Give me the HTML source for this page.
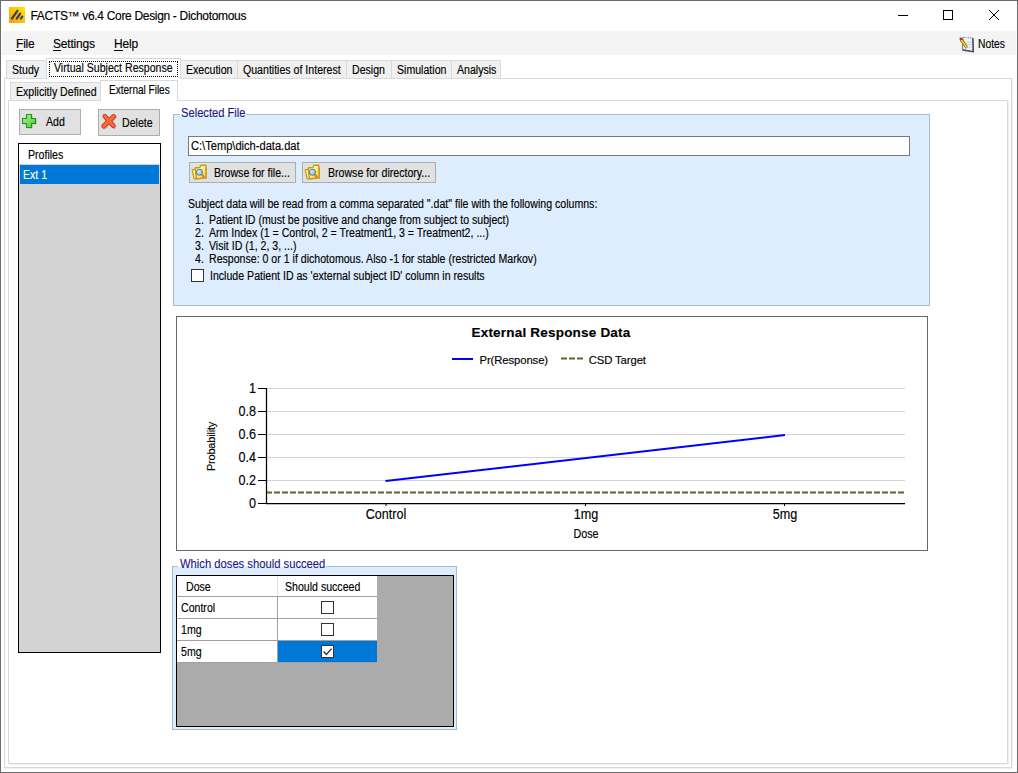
<!DOCTYPE html>
<html><head><meta charset="utf-8"><title>FACTS</title>
<style>
html,body{margin:0;padding:0;}
body{width:1018px;height:773px;position:relative;overflow:hidden;background:#fff;font-family:"Liberation Sans",sans-serif;}
.a{position:absolute;}
.t{position:absolute;white-space:nowrap;-webkit-text-stroke:0.15px currentColor;}
svg{position:absolute;overflow:visible;}
</style></head><body>

<div class="a" style="left:0px;top:0px;width:1018px;height:773px;box-sizing:border-box;border:1px solid #6b6b6b;background:#fff;"></div>
<svg style="left:9px;top:7px" width="16" height="16" viewBox="0 0 16 16">
<defs><linearGradient id="ig" x1="1" y1="0" x2="0" y2="1"><stop offset="0" stop-color="#ffea00"/><stop offset="1" stop-color="#f79a0a"/></linearGradient></defs>
<rect x="0" y="0" width="16" height="16" fill="url(#ig)"/>
<path d="M3 11.5 L8.4 3.8 M7.8 11.5 L11 6.8 M12 11.5 L13.2 9.6" stroke="#3d4152" stroke-width="2.3" stroke-linecap="round"/>
</svg>
<div class="t" style="left:30.5px;top:10.00px;font-size:12px;line-height:12px;letter-spacing:-0.32px;color:#000;font-weight:normal;">FACTS™ v6.4 Core Design - Dichotomous</div>
<div class="a" style="left:898px;top:15px;width:10px;height:1px;background:#000"></div>
<div class="a" style="left:943px;top:10px;width:10px;height:10px;box-sizing:border-box;border:1px solid #000;background:transparent;"></div>
<svg style="left:988px;top:9px" width="12" height="12" viewBox="0 0 12 12"><path d="M1 1 L11 11 M11 1 L1 11" stroke="#000" stroke-width="1"/></svg>
<div class="a" style="left:2px;top:31px;width:1014px;height:24px;background:#f4f4f4"></div>
<div class="t" style="left:16px;top:38.00px;font-size:12px;line-height:12px;letter-spacing:-0.2px;color:#000;font-weight:normal;">File</div>
<div class="t" style="left:53px;top:38.00px;font-size:12px;line-height:12px;letter-spacing:-0.2px;color:#000;font-weight:normal;">Settings</div>
<div class="t" style="left:114px;top:38.00px;font-size:12px;line-height:12px;letter-spacing:-0.2px;color:#000;font-weight:normal;">Help</div>
<div class="a" style="left:16px;top:50px;width:7px;height:1px;background:#000"></div>
<div class="a" style="left:53px;top:50px;width:8px;height:1px;background:#000"></div>
<div class="a" style="left:114px;top:50px;width:9px;height:1px;background:#000"></div>
<svg style="left:956px;top:34px" width="20" height="20" viewBox="0 0 20 20">
<path d="M8 4 L17.6 4.4 L17.9 18.4 L6.6 16.6 Z" fill="#a9b1ba"/>
<path d="M7 3.4 L16.6 3.9 L16.8 17.4 L6.3 15.6 Z" fill="#eef2fa" stroke="#6b7580" stroke-width="0.9"/>
<path d="M16.9 4 L17.4 17.8 L6.6 16" fill="none" stroke="#46505a" stroke-width="1.3"/>
<path d="M10.5 8 H15.5 M10.5 10.5 H15.5 M10.5 13 H15.5" stroke="#b8c8dc" stroke-width="0.8"/>
<path d="M8.5 3.6 h1.2 M10.7 3.7 h1.2 M12.9 3.8 h1.2 M15.1 3.9 h1.2" stroke="#fff" stroke-width="1"/>
<path d="M5.8 6.4 L10 12.8" stroke="#5a4500" stroke-width="3" stroke-linecap="round"/>
<path d="M5.8 6.4 L10 12.8" stroke="#ffd21a" stroke-width="1.8" stroke-linecap="round"/>
<path d="M9.4 13.6 L11 15.6 L10.9 12.6 Z" fill="#e8b090"/>
<circle cx="4.8" cy="4.8" r="1.4" fill="#d8241a"/>
</svg>
<div class="t" style="left:977.5px;top:38.00px;font-size:12px;line-height:12px;letter-spacing:0px;color:#000;font-weight:normal;transform:scaleX(0.86);transform-origin:0 0;">Notes</div>
<div class="a" style="left:4px;top:78px;width:1008px;height:690px;box-sizing:border-box;border:1px solid #d9d9d9;background:#fff;"></div>
<div class="a" style="left:1012px;top:79px;width:1px;height:689px;background:#efefef"></div>
<div class="a" style="left:5px;top:768px;width:1008px;height:1px;background:#efefef"></div>
<div class="a" style="left:6px;top:60px;width:42px;height:19px;box-sizing:border-box;border:1px solid #d9d9d9;background:#f0f0f0;"></div>
<div class="t" style="left:11.5px;top:64.00px;font-size:12px;line-height:12px;letter-spacing:0px;color:#000;font-weight:normal;transform:scaleX(0.882);transform-origin:0 0;">Study</div>
<div class="a" style="left:180px;top:60px;width:58px;height:19px;box-sizing:border-box;border:1px solid #d9d9d9;background:#f0f0f0;"></div>
<div class="t" style="left:185.5px;top:64.00px;font-size:12px;line-height:12px;letter-spacing:0px;color:#000;font-weight:normal;transform:scaleX(0.882);transform-origin:0 0;">Execution</div>
<div class="a" style="left:237px;top:60px;width:110px;height:19px;box-sizing:border-box;border:1px solid #d9d9d9;background:#f0f0f0;"></div>
<div class="t" style="left:242.5px;top:64.00px;font-size:12px;line-height:12px;letter-spacing:0px;color:#000;font-weight:normal;transform:scaleX(0.882);transform-origin:0 0;">Quantities of Interest</div>
<div class="a" style="left:346px;top:60px;width:46px;height:19px;box-sizing:border-box;border:1px solid #d9d9d9;background:#f0f0f0;"></div>
<div class="t" style="left:351.5px;top:64.00px;font-size:12px;line-height:12px;letter-spacing:0px;color:#000;font-weight:normal;transform:scaleX(0.882);transform-origin:0 0;">Design</div>
<div class="a" style="left:391px;top:60px;width:61px;height:19px;box-sizing:border-box;border:1px solid #d9d9d9;background:#f0f0f0;"></div>
<div class="t" style="left:396.5px;top:64.00px;font-size:12px;line-height:12px;letter-spacing:0px;color:#000;font-weight:normal;transform:scaleX(0.882);transform-origin:0 0;">Simulation</div>
<div class="a" style="left:451px;top:60px;width:50px;height:19px;box-sizing:border-box;border:1px solid #d9d9d9;background:#f0f0f0;"></div>
<div class="t" style="left:456.5px;top:64.00px;font-size:12px;line-height:12px;letter-spacing:0px;color:#000;font-weight:normal;transform:scaleX(0.882);transform-origin:0 0;">Analysis</div>
<div class="a" style="left:46px;top:58px;width:135px;height:21px;box-sizing:border-box;border:1px solid #d9d9d9;background:#fff;border-bottom:none;"></div>
<div class="a" style="left:49px;top:61px;width:129px;height:16px;box-sizing:border-box;border:1px dotted #000"></div>
<div class="t" style="left:53.7px;top:62.00px;font-size:12px;line-height:12px;letter-spacing:0px;color:#000;font-weight:normal;transform:scaleX(0.882);transform-origin:0 0;">Virtual Subject Response</div>
<div class="a" style="left:8px;top:100px;width:1000px;height:664px;box-sizing:border-box;border:1px solid #d9d9d9;background:#fff;"></div>
<div class="a" style="left:1008px;top:101px;width:1px;height:663px;background:#efefef"></div>
<div class="a" style="left:9px;top:764px;width:1000px;height:1px;background:#efefef"></div>
<div class="a" style="left:10px;top:82px;width:92px;height:19px;box-sizing:border-box;border:1px solid #d9d9d9;background:#f0f0f0;"></div>
<div class="t" style="left:16px;top:86.00px;font-size:12px;line-height:12px;letter-spacing:0px;color:#000;font-weight:normal;transform:scaleX(0.882);transform-origin:0 0;">Explicitly Defined</div>
<div class="a" style="left:100px;top:80px;width:78px;height:21px;box-sizing:border-box;border:1px solid #d9d9d9;background:#fff;border-bottom:none;"></div>
<div class="t" style="left:108.5px;top:84.00px;font-size:12px;line-height:12px;letter-spacing:0px;color:#000;font-weight:normal;transform:scaleX(0.835);transform-origin:0 0;">External Files</div>
<div class="a" style="left:19px;top:109px;width:62px;height:26px;box-sizing:border-box;border:1px solid #adadad;background:#e1e1e1;"></div>
<svg style="left:21px;top:113px" width="17" height="17" viewBox="0 0 17 17">
<defs><linearGradient id="pg" x1="0" y1="0" x2="1" y2="1"><stop offset="0" stop-color="#b0f590"/><stop offset="1" stop-color="#4fc232"/></linearGradient></defs>
<path d="M6.5 2.5 H11.5 V6.5 H15.5 V11.5 H11.5 V15.5 H6.5 V11.5 H2.5 V6.5 H6.5 Z" fill="rgba(60,40,60,0.28)"/>
<path d="M5.5 1.5 H10.5 V5.5 H14.5 V10.5 H10.5 V14.5 H5.5 V10.5 H1.5 V5.5 H5.5 Z" fill="url(#pg)" stroke="#17961a" stroke-width="1.1" stroke-linejoin="round"/>
</svg>
<div class="t" style="left:46px;top:116.00px;font-size:12px;line-height:12px;letter-spacing:0px;color:#000;font-weight:normal;transform:scaleX(0.882);transform-origin:0 0;">Add</div>
<div class="a" style="left:98px;top:109px;width:62px;height:27px;box-sizing:border-box;border:1px solid #adadad;background:#e1e1e1;"></div>
<svg style="left:100px;top:113px" width="17" height="17" viewBox="0 0 17 17">
<path d="M5.5 4 L14 13.5 M14.5 4 L4.5 14" stroke="rgba(40,40,40,0.3)" stroke-width="4.4" stroke-linecap="round"/>
<path d="M4.8 3.2 L13.2 12.6 M13.6 3.4 L3.6 13.2" stroke="#d42a10" stroke-width="4.6" stroke-linecap="round"/>
<path d="M4.8 3.2 L13.2 12.6 M13.6 3.4 L3.6 13.2" stroke="#ff6a35" stroke-width="3" stroke-linecap="round"/>
</svg>
<div class="t" style="left:121.8px;top:117.00px;font-size:12px;line-height:12px;letter-spacing:0px;color:#000;font-weight:normal;transform:scaleX(0.882);transform-origin:0 0;">Delete</div>
<div class="a" style="left:18px;top:143px;width:143px;height:510px;box-sizing:border-box;border:1px solid #000;background:#d3d3d3;"></div>
<div class="a" style="left:19px;top:144px;width:141px;height:20px;background:#fff"></div>
<div class="a" style="left:19px;top:164px;width:141px;height:1px;background:#d8d2cc"></div>
<div class="a" style="left:20px;top:165px;width:139px;height:19px;background:#0078d7"></div>
<div class="t" style="left:28px;top:149.00px;font-size:12px;line-height:12px;letter-spacing:0px;color:#000;font-weight:normal;transform:scaleX(0.882);transform-origin:0 0;">Profiles</div>
<div class="t" style="left:23px;top:169.00px;font-size:12px;line-height:12px;letter-spacing:0px;color:#fff;font-weight:normal;transform:scaleX(0.882);transform-origin:0 0;">Ext 1</div>
<div class="a" style="left:173px;top:114px;width:757px;height:192px;box-sizing:border-box;border:1px solid #a8bccf;background:#deedfd;"></div>
<div class="a" style="left:180px;top:106px;width:66px;height:9px;background:#fff"></div>
<div class="t" style="left:181px;top:107.00px;font-size:12px;line-height:12px;letter-spacing:0px;color:#1b1b8a;font-weight:normal;transform:scaleX(0.93);transform-origin:0 0;">Selected File</div>
<div class="a" style="left:188px;top:136px;width:722px;height:20px;box-sizing:border-box;border:1px solid #7a7a7a;background:#fff;"></div>
<div class="t" style="left:190.8px;top:140.00px;font-size:12px;line-height:12px;letter-spacing:0px;color:#000;font-weight:normal;transform:scaleX(0.925);transform-origin:0 0;">C:\Temp\dich-data.dat</div>
<div class="a" style="left:189px;top:162px;width:107px;height:21px;box-sizing:border-box;border:1px solid #adadad;background:#e1e1e1;"></div>
<svg style="left:191px;top:164px" width="17" height="17" viewBox="0 0 17 17">
<defs><linearGradient id="fg191" x1="0" y1="0" x2="1" y2="1"><stop offset="0" stop-color="#fffbe0"/><stop offset="0.6" stop-color="#ffe680"/><stop offset="1" stop-color="#f0c020"/></linearGradient></defs>
<path d="M6 15.5 L16 14.5 L16 3 Z" fill="rgba(40,40,60,0.35)"/>
<path d="M1.2 5.8 L4.6 5.2 L5.6 14.6 L3.2 15 Z" fill="#fff3b0" stroke="#c89a00" stroke-width="1.2" stroke-linejoin="round"/>
<path d="M4.2 4 L9 3.4 L9.6 1.4 L14.8 1.2 L15.2 13.6 L5.4 14.8 Z" fill="url(#fg191)" stroke="#c89a00" stroke-width="1.3" stroke-linejoin="round"/>
<circle cx="8.4" cy="8.2" r="3" fill="#9ad8f8" stroke="#6f7d8a" stroke-width="1.1"/>
<circle cx="7.6" cy="7.4" r="1" fill="#e8f8ff"/>
<path d="M11 10.9 L13.2 13.1" stroke="#f27a30" stroke-width="2.2"/>
</svg>
<div class="t" style="left:214.4px;top:167.00px;font-size:12px;line-height:12px;letter-spacing:0px;color:#000;font-weight:normal;transform:scaleX(0.882);transform-origin:0 0;">Browse for file...</div>
<div class="a" style="left:302px;top:162px;width:134px;height:21px;box-sizing:border-box;border:1px solid #adadad;background:#e1e1e1;"></div>
<svg style="left:304px;top:164px" width="17" height="17" viewBox="0 0 17 17">
<defs><linearGradient id="fg304" x1="0" y1="0" x2="1" y2="1"><stop offset="0" stop-color="#fffbe0"/><stop offset="0.6" stop-color="#ffe680"/><stop offset="1" stop-color="#f0c020"/></linearGradient></defs>
<path d="M6 15.5 L16 14.5 L16 3 Z" fill="rgba(40,40,60,0.35)"/>
<path d="M1.2 5.8 L4.6 5.2 L5.6 14.6 L3.2 15 Z" fill="#fff3b0" stroke="#c89a00" stroke-width="1.2" stroke-linejoin="round"/>
<path d="M4.2 4 L9 3.4 L9.6 1.4 L14.8 1.2 L15.2 13.6 L5.4 14.8 Z" fill="url(#fg304)" stroke="#c89a00" stroke-width="1.3" stroke-linejoin="round"/>
<circle cx="8.4" cy="8.2" r="3" fill="#9ad8f8" stroke="#6f7d8a" stroke-width="1.1"/>
<circle cx="7.6" cy="7.4" r="1" fill="#e8f8ff"/>
<path d="M11 10.9 L13.2 13.1" stroke="#f27a30" stroke-width="2.2"/>
</svg>
<div class="t" style="left:327.7px;top:167.00px;font-size:12px;line-height:12px;letter-spacing:0px;color:#000;font-weight:normal;transform:scaleX(0.882);transform-origin:0 0;">Browse for directory...</div>
<div class="t" style="left:188.2px;top:198.00px;font-size:12px;line-height:12px;letter-spacing:0px;color:#000;font-weight:normal;transform:scaleX(0.882);transform-origin:0 0;">Subject data will be read from a comma separated ".dat" file with the following columns:</div>
<div class="t" style="left:194.7px;top:214.00px;font-size:12px;line-height:12px;letter-spacing:0px;color:#000;font-weight:normal;transform:scaleX(0.882);transform-origin:0 0;">1.</div>
<div class="t" style="left:209px;top:214.00px;font-size:12px;line-height:12px;letter-spacing:0px;color:#000;font-weight:normal;transform:scaleX(0.882);transform-origin:0 0;">Patient ID (must be positive and change from subject to subject)</div>
<div class="t" style="left:194.7px;top:227.00px;font-size:12px;line-height:12px;letter-spacing:0px;color:#000;font-weight:normal;transform:scaleX(0.882);transform-origin:0 0;">2.</div>
<div class="t" style="left:209px;top:227.00px;font-size:12px;line-height:12px;letter-spacing:0px;color:#000;font-weight:normal;transform:scaleX(0.882);transform-origin:0 0;">Arm Index (1 = Control, 2 = Treatment1, 3 = Treatment2, ...)</div>
<div class="t" style="left:194.7px;top:240.00px;font-size:12px;line-height:12px;letter-spacing:0px;color:#000;font-weight:normal;transform:scaleX(0.882);transform-origin:0 0;">3.</div>
<div class="t" style="left:209px;top:240.00px;font-size:12px;line-height:12px;letter-spacing:0px;color:#000;font-weight:normal;transform:scaleX(0.882);transform-origin:0 0;">Visit ID (1, 2, 3, ...)</div>
<div class="t" style="left:194.7px;top:253.00px;font-size:12px;line-height:12px;letter-spacing:0px;color:#000;font-weight:normal;transform:scaleX(0.882);transform-origin:0 0;">4.</div>
<div class="t" style="left:209px;top:253.00px;font-size:12px;line-height:12px;letter-spacing:0px;color:#000;font-weight:normal;transform:scaleX(0.882);transform-origin:0 0;">Response: 0 or 1 if dichotomous. Also -1 for stable (restricted Markov)</div>
<div class="a" style="left:191px;top:269px;width:13px;height:13px;box-sizing:border-box;border:1px solid #333;background:#fff;"></div>
<div class="t" style="left:209.8px;top:270.00px;font-size:12px;line-height:12px;letter-spacing:0px;color:#000;font-weight:normal;transform:scaleX(0.882);transform-origin:0 0;">Include Patient ID as 'external subject ID' column in results</div>
<div class="a" style="left:176px;top:316px;width:752px;height:235px;box-sizing:border-box;border:1px solid #696969;background:#fff;"></div>
<div class="t" style="left:176px;width:752px;text-align:center;top:326px;font-size:13.5px;line-height:13px;font-weight:bold;letter-spacing:0.2px;text-indent:-2px">External Response Data</div>
<div class="a" style="left:452px;top:358px;width:21px;height:2px;background:#0000ff"></div>
<div class="t" style="left:479.5px;top:355.00px;font-size:11.3px;line-height:11.3px;letter-spacing:-0.1px;color:#000;font-weight:normal;">Pr(Response)</div>
<svg style="left:561px;top:357px" width="22" height="3"><path d="M0 1.5 H22" stroke="#556b2f" stroke-width="2" stroke-dasharray="6 2"/></svg>
<div class="t" style="left:588.7px;top:355.00px;font-size:11.3px;line-height:11.3px;letter-spacing:-0.1px;color:#000;font-weight:normal;">CSD Target</div>
<svg style="left:0;top:0" width="1018" height="773">
<path d="M266 480.5 H905" stroke="#d3d3d3" stroke-width="1"/><path d="M266 457.5 H905" stroke="#d3d3d3" stroke-width="1"/><path d="M266 434.5 H905" stroke="#d3d3d3" stroke-width="1"/><path d="M266 411.5 H905" stroke="#d3d3d3" stroke-width="1"/><path d="M266 388.5 H905" stroke="#d3d3d3" stroke-width="1"/>
<path d="M266 492.5 H905" stroke="#556b2f" stroke-width="2" stroke-dasharray="6 2"/>
<path d="M385.5 481 L785 435" stroke="#0000ff" stroke-width="2"/>
<path d="M266.5 388 V503.5 H905" stroke="#000" stroke-width="1.25" fill="none"/>
<path d="M258 503.5 H266" stroke="#000" stroke-width="1"/><path d="M258 480.5 H266" stroke="#000" stroke-width="1"/><path d="M258 457.5 H266" stroke="#000" stroke-width="1"/><path d="M258 434.5 H266" stroke="#000" stroke-width="1"/><path d="M258 411.5 H266" stroke="#000" stroke-width="1"/><path d="M258 388.5 H266" stroke="#000" stroke-width="1"/>
<path d="M386 503 V506 M585.5 503 V506 M784.5 503 V506" stroke="#000" stroke-width="1"/>
</svg>
<div class="t" style="left:155.8px;width:100px;text-align:right;top:496px;font-size:14px;line-height:14px;transform:scaleX(0.9);transform-origin:100% 0">0</div>
<div class="t" style="left:155.8px;width:100px;text-align:right;top:473px;font-size:14px;line-height:14px;transform:scaleX(0.9);transform-origin:100% 0">0.2</div>
<div class="t" style="left:155.8px;width:100px;text-align:right;top:450px;font-size:14px;line-height:14px;transform:scaleX(0.9);transform-origin:100% 0">0.4</div>
<div class="t" style="left:155.8px;width:100px;text-align:right;top:427px;font-size:14px;line-height:14px;transform:scaleX(0.9);transform-origin:100% 0">0.6</div>
<div class="t" style="left:155.8px;width:100px;text-align:right;top:404px;font-size:14px;line-height:14px;transform:scaleX(0.9);transform-origin:100% 0">0.8</div>
<div class="t" style="left:155.8px;width:100px;text-align:right;top:381px;font-size:14px;line-height:14px;transform:scaleX(0.9);transform-origin:100% 0">1</div>
<div class="t" style="left:336px;width:100px;text-align:center;top:507px;font-size:14px;line-height:14px;transform:scaleX(0.9);transform-origin:50% 0">Control</div>
<div class="t" style="left:535.5px;width:100px;text-align:center;top:507px;font-size:14px;line-height:14px;transform:scaleX(0.9);transform-origin:50% 0">1mg</div>
<div class="t" style="left:734.5px;width:100px;text-align:center;top:507px;font-size:14px;line-height:14px;transform:scaleX(0.9);transform-origin:50% 0">5mg</div>
<div class="t" style="left:535.5px;width:100px;text-align:center;top:528px;font-size:12.5px;line-height:12.5px;transform:scaleX(0.86);transform-origin:50% 0">Dose</div>
<div class="t" style="left:161px;top:440.5px;width:100px;text-align:center;font-size:11px;line-height:11px;letter-spacing:-0.2px;transform:rotate(-90deg);transform-origin:50% 50%">Probability</div>
<div class="a" style="left:172px;top:566px;width:285px;height:164px;box-sizing:border-box;border:1px solid #a8bccf;background:#deedfd;"></div>
<div class="a" style="left:178px;top:557px;width:148px;height:10px;background:#fff"></div>
<div class="t" style="left:180.4px;top:558.00px;font-size:12px;line-height:12px;letter-spacing:0px;color:#1b1b8a;font-weight:normal;transform:scaleX(0.935);transform-origin:0 0;">Which doses should succeed</div>
<div class="a" style="left:176px;top:575px;width:278px;height:152px;box-sizing:border-box;border:1px solid #000;background:#ababab;"></div>
<div class="a" style="left:177px;top:576px;width:200px;height:21px;background:#fff"></div>
<div class="a" style="left:177px;top:596px;width:200px;height:1px;background:#a0a0a0"></div>
<div class="a" style="left:277px;top:576px;width:1px;height:20px;background:#e3e3e3"></div>
<div class="t" style="left:186px;top:581.00px;font-size:12px;line-height:12px;letter-spacing:0px;color:#000;font-weight:normal;transform:scaleX(0.882);transform-origin:0 0;">Dose</div>
<div class="t" style="left:285.3px;top:581.00px;font-size:12px;line-height:12px;letter-spacing:0px;color:#000;font-weight:normal;transform:scaleX(0.882);transform-origin:0 0;">Should succeed</div>
<div class="a" style="left:177px;top:597px;width:100px;height:21px;background:#fff"></div>
<div class="a" style="left:278px;top:597px;width:99px;height:21px;background:#fff"></div>
<div class="a" style="left:177px;top:618px;width:200px;height:1px;background:#a0a0a0"></div>
<div class="a" style="left:277px;top:597px;width:1px;height:22px;background:#a0a0a0"></div>
<div class="t" style="left:180.7px;top:602.00px;font-size:12px;line-height:12px;letter-spacing:0px;color:#000;font-weight:normal;transform:scaleX(0.882);transform-origin:0 0;">Control</div>
<div class="a" style="left:321px;top:601px;width:13px;height:13px;box-sizing:border-box;border:1px solid #333;background:#fff;"></div>
<div class="a" style="left:177px;top:619px;width:100px;height:21px;background:#fff"></div>
<div class="a" style="left:278px;top:619px;width:99px;height:21px;background:#fff"></div>
<div class="a" style="left:177px;top:640px;width:200px;height:1px;background:#a0a0a0"></div>
<div class="a" style="left:277px;top:619px;width:1px;height:22px;background:#a0a0a0"></div>
<div class="t" style="left:180.7px;top:624.00px;font-size:12px;line-height:12px;letter-spacing:0px;color:#000;font-weight:normal;transform:scaleX(0.882);transform-origin:0 0;">1mg</div>
<div class="a" style="left:321px;top:623px;width:13px;height:13px;box-sizing:border-box;border:1px solid #333;background:#fff;"></div>
<div class="a" style="left:177px;top:641px;width:100px;height:21px;background:#fff"></div>
<div class="a" style="left:278px;top:641px;width:99px;height:21px;background:#0078d7"></div>
<div class="a" style="left:177px;top:662px;width:200px;height:1px;background:#a0a0a0"></div>
<div class="a" style="left:277px;top:641px;width:1px;height:22px;background:#a0a0a0"></div>
<div class="t" style="left:180.7px;top:646.00px;font-size:12px;line-height:12px;letter-spacing:0px;color:#000;font-weight:normal;transform:scaleX(0.882);transform-origin:0 0;">5mg</div>
<div class="a" style="left:321px;top:645px;width:13px;height:13px;box-sizing:border-box;border:1px solid #333;background:#fff;"></div>
<svg style="left:321px;top:645px" width="13" height="13"><path d="M2.6 6.4 L5.4 9.4 L10.6 3.6" stroke="#333" stroke-width="1.4" fill="none"/></svg>
</body></html>
